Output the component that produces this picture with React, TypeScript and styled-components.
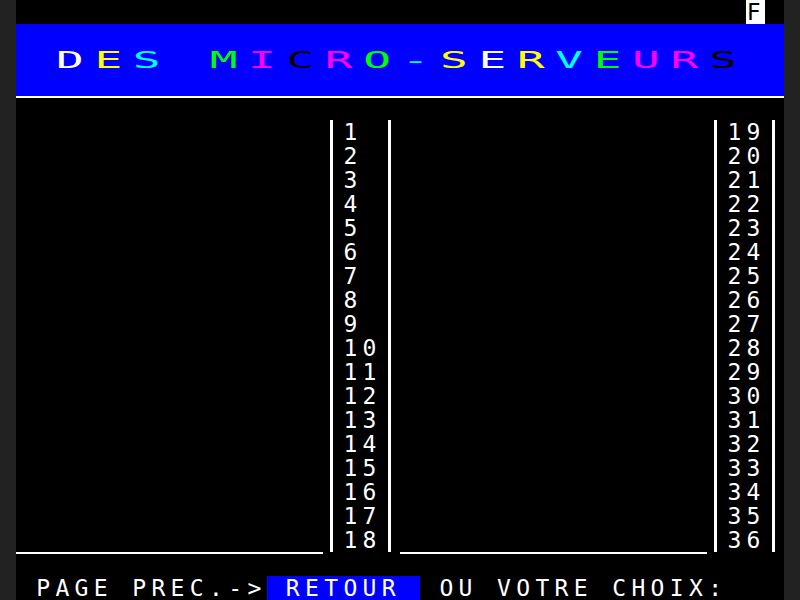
import React from "react";
import styled, { createGlobalStyle } from "styled-components";

const COL = 19.2;
const ROW = 24;

const Global = createGlobalStyle`
  html, body { margin: 0; padding: 0; background: #222222; }
  body { font-family: "DejaVu Sans Mono", "Liberation Mono", monospace; }
`;

const Screen = styled.div`
  width: ${40 * COL}px;
  height: 600px;
  margin: 0 auto;
  background: #000;
  color: #fff;
  display: flex;
  flex-direction: column;
  overflow: hidden;
  font-family: "DejaVu Sans Mono", "Liberation Mono", monospace;
  font-size: 23px;
  line-height: ${ROW}px;
  letter-spacing: 5.353px;
  white-space: pre;
`;

const StatusRow = styled.div`
  height: ${ROW}px;
  display: flex;
  justify-content: flex-end;
  padding-right: ${COL}px;
`;

const Flag = styled.span`
  width: ${COL}px;
  background: #fff;
  color: #000;
  padding-left: 1px;
  box-sizing: border-box;
`;

const TitleBand = styled.div`
  height: ${3 * ROW}px;
  background: #0000ff;
  display: flex;
  align-items: center;
`;

const TitleLine = styled.div`
  margin-left: ${2 * COL}px;
  padding-left: 1px;
  transform: scaleX(2);
  transform-origin: left center;
`;

const Letter = styled.span<{ $c: string }>`
  color: ${(p) => p.$c};
`;

const HeaderRule = styled.div`
  height: 2px;
  background: #fff;
  margin-bottom: 22px;
`;

const ListArea = styled.div`
  height: ${19 * ROW}px;
  display: flex;
`;

const Panel = styled.div`
  width: ${20 * COL}px;
  display: flex;
  flex-direction: column;
`;

const PanelBody = styled.div`
  height: ${18 * ROW}px;
  display: flex;
`;

const Blank = styled.div`
  width: ${16 * COL}px;
`;

const NumberBox = styled.div`
  margin-left: 6.8px;
  width: 61px;
  box-sizing: border-box;
  border-left: 3px solid #fff;
  border-right: 3px solid #fff;
  padding-left: 10.4px;
  display: flex;
  flex-direction: column;
`;

const Num = styled.div`
  height: ${ROW}px;
`;

const PanelRule = styled.div`
  width: ${16 * COL}px;
  height: 2px;
  background: #fff;
`;

const PromptRow = styled.div`
  height: ${ROW}px;
  display: flex;
  padding-left: 1px;
`;

const Highlight = styled.span`
  background: #0000ff;
`;

const W = "#ffffff";
const Y = "#ffff00";
const C = "#00ffff";
const G = "#00ff00";
const M = "#ff00ff";
const K = "#000000";

const title: [string, string][] = [
  ["D", W], ["E", Y], ["S", C], [" ", W],
  ["M", G], ["I", M], ["C", K], ["R", M], ["O", G],
  ["-", C],
  ["S", Y], ["E", W], ["R", Y], ["V", C], ["E", G], ["U", M], ["R", M], ["S", K],
];

function NumberPanel({ start }: { start: number }) {
  const nums = Array.from({ length: 18 }, (_, i) => start + i);
  return (
    <Panel>
      <PanelBody>
        <Blank />
        <NumberBox>
          {nums.map((n) => (
            <Num key={n}>{String(n)}</Num>
          ))}
        </NumberBox>
      </PanelBody>
      <PanelRule />
    </Panel>
  );
}

export default function App() {
  return (
    <>
      <Global />
      <Screen>
        <StatusRow>
          <Flag>F</Flag>
        </StatusRow>
        <TitleBand>
          <TitleLine>
            {title.map(([ch, col], i) => (
              <Letter key={i} $c={col}>
                {ch}
              </Letter>
            ))}
          </TitleLine>
        </TitleBand>
        <HeaderRule />
        <ListArea>
          <NumberPanel start={1} />
          <NumberPanel start={19} />
        </ListArea>
        <PromptRow>
          <span>{" PAGE PREC.->"}</span>
          <Highlight>{" RETOUR "}</Highlight>
          <span>{" OU VOTRE CHOIX:"}</span>
        </PromptRow>
      </Screen>
    </>
  );
}
